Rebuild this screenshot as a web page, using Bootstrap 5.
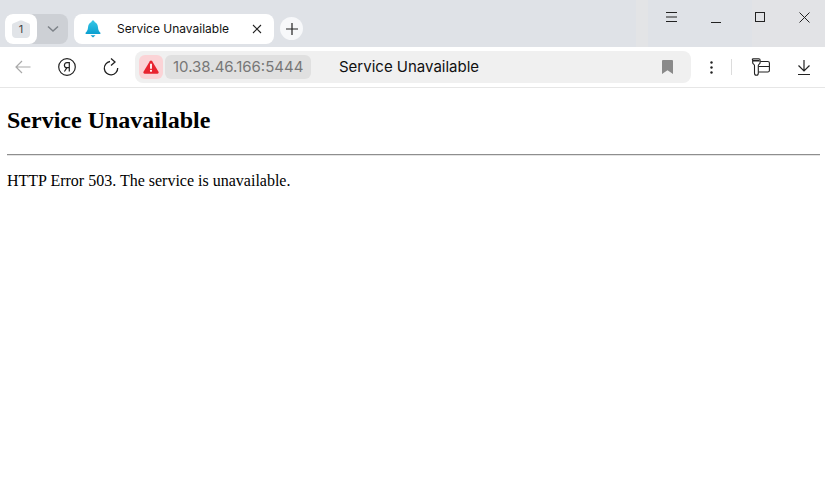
<!DOCTYPE html>
<html lang="en">
<head>
<meta charset="utf-8">
<title>Service Unavailable</title>
<link rel="stylesheet" href="https://cdn.jsdelivr.net/npm/bootstrap@5.3.0/dist/css/bootstrap.min.css">
<style>
html,body{height:100%;overflow:hidden;background:#fff}
body{font-family:"Inter","Noto Sans",sans-serif;color:#000}
svg{display:block}
.strip{height:47px;background:linear-gradient(90deg,#dfe2e7 0,#dfe2e7 636px,#e3e4e6 636px,#e3e4e6 648px,#dfe2e7 648px,#dfe2e7 752px,#e2e3e6 752px);padding:14px 0 0 5px}
.group-tile{width:63px;height:30px;border-radius:8px;background:#cdd0d5}
.count-side{width:32px;height:30px;background:#fff;border-radius:8px}
.count-num{width:18px;height:18px;font-size:11px;color:#444;line-height:19px;text-align:center}
.count-shape{top:0;left:0}
.count-label{z-index:1}
.chev-side{width:31px}
.tab-tile{width:200px;height:30px;margin-left:6px;background:#fff;border-radius:8px;padding-left:11px}
.tab-title{font-size:12px;margin-left:16px;width:135px;white-space:nowrap;color:#111}
.new-tab{width:23px;height:23px;border-radius:50%;background:#f7f8fa;margin-left:6px;margin-top:3px}
.win-ctl{top:0;right:-1px;height:34px}
.win-ctl .win-btn:first-child{margin-right:1px;margin-left:-1px}
.win-btn{width:44px;height:34px}
.tools{height:41px;background:#fff;border-radius:8px 8px 0 0;border-bottom:1px solid #e6e6e6;padding-left:1px;overflow:hidden}
.tool-slot{width:44px;height:40px;flex:none}
.omni{width:556px;height:32px;flex:none;margin-left:2px;background:#f0f0f0;border-radius:8px;padding:4px}
.alert-tile{width:24px;height:24px;background:#fbd3d6;border-radius:6px}
.host-pill{width:146px;height:24px;margin-left:2px;background:#e0e0e0;border-radius:6px;padding-left:8px;font-size:15px;line-height:24px;color:#777;white-space:nowrap}
.page-title{font-size:15px;margin-left:28px;white-space:nowrap;color:#111}
.bookmark-gap{width:14px}
.kebab-slot{width:24px;height:40px;flex:none}
.sep{width:1px;height:16px;background:#dcdcdc;flex:none}
.panel-slot{margin-left:6px}
.page-body{padding:0 5px 0 7px;font-family:"Liberation Serif",serif}
.err-head{font-family:"Liberation Serif",serif;font-size:24px;font-weight:700;line-height:27px;margin:19px 0 20px;color:#000}
.err-rule{margin:0 0 16px;border:0;border-top:1px solid #8e8e8e;border-bottom:1px solid #e4e4e4;opacity:1}
.err-text{font-size:16px;line-height:18px;margin:0;color:#000}
</style>
</head>
<body>
<div class="position-relative strip d-flex align-items-start">
  <div class="group-tile d-flex">
    <div class="count-side d-flex align-items-center justify-content-center">
      <div class="count-num position-relative">
        <svg class="count-shape position-absolute" width="18" height="18" viewBox="0 0 18 18"><path d="M8 .6c.6-.3 1.400-.3 2 0l6.500 2.700c1 .4 1.500 1 1.500 2V14c0 2.400-1.600 4-4 4H4c-2.400 0-4-1.600-4-4V5.300c0-1 .5-1.600 1.500-2z" fill="#e1e4e8"/></svg>
        <span class="count-label position-relative">1</span>
      </div>
    </div>
    <div class="chev-side d-flex align-items-center justify-content-center">
      <svg width="12" height="8" viewBox="0 0 12 8"><path d="M1 1.500 6 6l5-4.500" fill="none" stroke="#7d8288" stroke-width="1.500"/></svg>
    </div>
  </div>
  <div class="tab-tile d-flex align-items-center">
    <svg width="16" height="18" viewBox="0 0 16 18"><defs><linearGradient id="bl" x1="0" y1="0" x2="0" y2="1"><stop offset="0" stop-color="#35c7e6"/><stop offset="1" stop-color="#0a9fd0"/></linearGradient></defs><path d="M8 .5c1 0 1.500.7 1.600 1.500C12 3 12.800 5 13 7.500c.2 2.500 1 4 2.400 5.300.4.500.2 1.200-.6 1.200H1.200c-.8 0-1-.7-.6-1.200C2 11.500 2.800 10 3 7.500 3.200 5 4 3 6.400 2 6.500 1.200 7 .5 8 .5z" fill="url(#bl)"/><path d="M5.500 15.300h5L8 17.500z" fill="#0a9fd0"/></svg>
    <span class="tab-title">Service Unavailable</span>
    <svg width="10" height="10" viewBox="0 0 10 10"><path d="M1 1l8 8M9 1 1 9" stroke="#222" stroke-width="1.100"/></svg>
  </div>
  <div class="new-tab d-flex align-items-center justify-content-center">
    <svg width="12" height="12" viewBox="0 0 12 12"><path d="M6 0v12M0 6h12" stroke="#222" stroke-width="1.200"/></svg>
  </div>
  <div class="position-absolute win-ctl d-flex">
    <div class="win-btn d-flex align-items-center justify-content-center"><svg width="11" height="10" viewBox="0 0 11 10"><path d="M0 .5h11M0 5h11M0 9.500h11" stroke="#222" stroke-width="1"/></svg></div>
    <div class="win-btn d-flex align-items-center justify-content-center"><svg width="11" height="12" viewBox="0 0 11 12"><path d="M0 11.500h10" stroke="#222" stroke-width="1"/></svg></div>
    <div class="win-btn d-flex align-items-center justify-content-center"><svg width="10" height="10" viewBox="0 0 10 10"><rect x=".5" y=".5" width="9" height="9" fill="none" stroke="#222"/></svg></div>
    <div class="win-btn d-flex align-items-center justify-content-center"><svg width="11" height="11" viewBox="0 0 11 11"><path d="M.5.500l10 10M10.500.500l-10 10" stroke="#222" stroke-width="1"/></svg></div>
  </div>
</div>
<div class="tools d-flex align-items-center">
  <div class="tool-slot d-flex align-items-center justify-content-center">
    <svg width="16" height="14" viewBox="0 0 16 14"><path d="M15.500 7H1M7 1 1 7l6 6" fill="none" stroke="#a9a9a9" stroke-width="1.200"/></svg>
  </div>
  <div class="tool-slot d-flex align-items-center justify-content-center">
    <svg width="18" height="18" viewBox="0 0 18 18"><circle cx="9" cy="9" r="8.300" fill="none" stroke="#222" stroke-width="1.200"/><path d="M11.300 13.500V4.700H8.900c-1.500 0-2.500 1-2.500 2.500s1 2.500 2.500 2.500h2.400M9 9.700l-2.600 3.800" fill="none" stroke="#222" stroke-width="1.200"/></svg>
  </div>
  <div class="tool-slot d-flex align-items-center justify-content-center">
    <svg width="16" height="18" viewBox="0 0 16 18"><path d="M7 3.500A6.700 6.700 0 1 0 14.700 10" fill="none" stroke="#222" stroke-width="1.300"/><path d="M8 .5 12 4 8 7.500" fill="none" stroke="#222" stroke-width="1.300"/></svg>
  </div>
  <div class="omni d-flex align-items-center">
    <div class="alert-tile d-flex align-items-center justify-content-center">
      <svg width="16" height="14" viewBox="0 0 16 14"><path d="M8 .5c.5 0 .9.200 1.200.7l6.300 10.600c.5.900-.1 1.900-1.100 1.900H1.600c-1 0-1.600-1-1.100-1.900L6.800 1.200C7.100.7 7.500.5 8 .5z" fill="#e8232f"/><path d="M8 3.700v5" stroke="#fff" stroke-width="1.800"/><circle cx="8" cy="10.800" r="1.100" fill="#fff"/></svg>
    </div>
    <div class="host-pill">10.38.46.166:5444</div>
    <div class="page-title flex-grow-1">Service Unavailable</div>
    <svg width="11" height="14" viewBox="0 0 11 14"><path d="M1 0h9a1 1 0 0 1 1 1v13L5.500 10.300 0 14V1a1 1 0 0 1 1-1z" fill="#8a8a8a"/></svg>
    <div class="bookmark-gap"></div>
  </div>
  <div class="kebab-slot d-flex align-items-center justify-content-center ms-2">
    <svg width="3" height="13" viewBox="0 0 3 13"><circle cx="1.500" cy="1.500" r="1.200" fill="#222"/><circle cx="1.500" cy="6.500" r="1.200" fill="#222"/><circle cx="1.500" cy="11.500" r="1.200" fill="#222"/></svg>
  </div>
  <div class="sep ms-2"></div>
  <div class="tool-slot panel-slot d-flex align-items-center justify-content-center">
    <svg width="19" height="18" viewBox="0 0 19 18"><path d="M2.200.7h5.600c.8 0 1.300.5 1.300 1.300v2.700c0 1.200-1.800 1.600-1.800 2.800v7.800c0 1.300-.9 2-1.900 2s-1.900-.7-1.900-2V7.500c0-1.200-1.800-1.600-1.800-2.800V2C.9 1.200 1.400.7 2.200.7z" fill="none" stroke="#222" stroke-width="1.100"/><path d="M1.500 2.600h7" stroke="#222" stroke-width="1.800"/><path d="M9.300 3.500h7.500c1 0 1.600.6 1.600 1.600v7.300c0 1-.6 1.600-1.600 1.600H7.500M7.500 8.500h11" fill="none" stroke="#222" stroke-width="1.100"/></svg>
  </div>
  <div class="tool-slot d-flex align-items-center justify-content-center">
    <svg width="14" height="15" viewBox="0 0 14 15"><path d="M7 0v11M1.500 5.500 7 11l5.500-5.500M1 14.500h12" fill="none" stroke="#222" stroke-width="1.200"/></svg>
  </div>
</div>
<main class="page-body">
  <h1 class="err-head">Service Unavailable</h1>
  <hr class="err-rule">
  <p class="err-text">HTTP Error 503. The service is unavailable.</p>
</main>
</body>
</html>
